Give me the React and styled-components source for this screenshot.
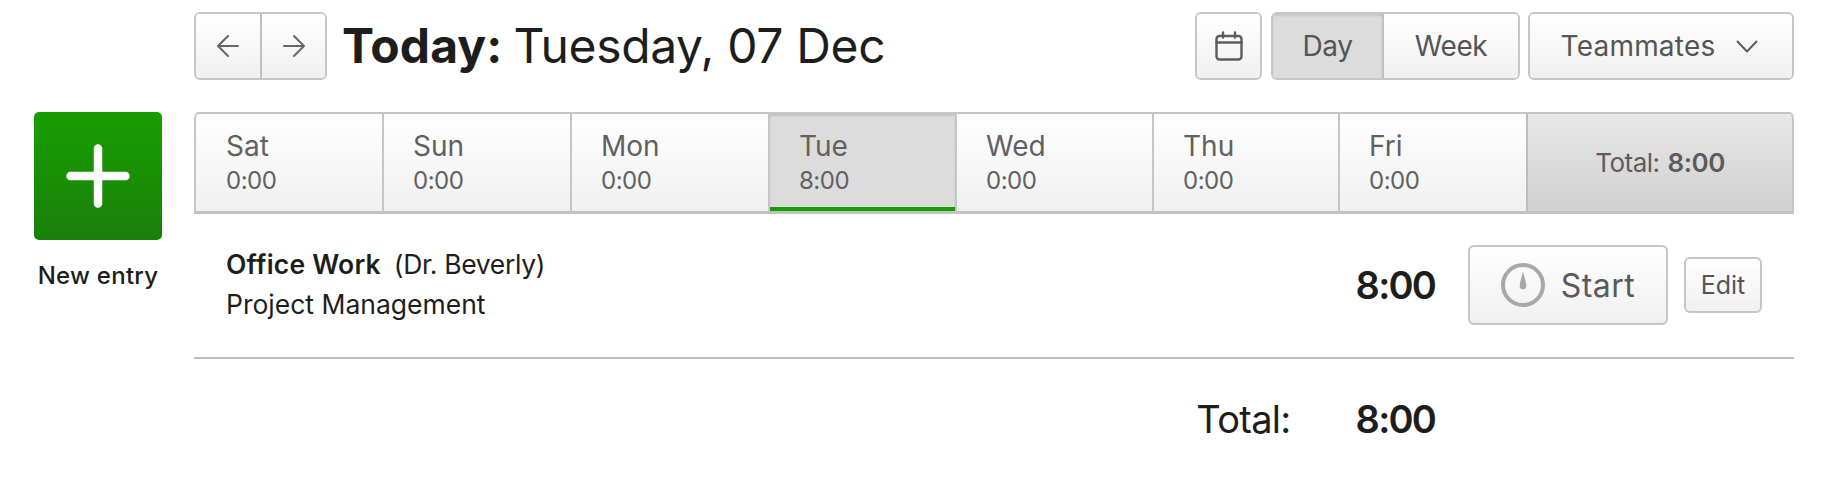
import React from "react";
import styled, { createGlobalStyle } from "styled-components";

const Global = createGlobalStyle`
  html, body { margin: 0; padding: 0; background: #fff; }
  body { font-family: Inter, "Liberation Sans", sans-serif; color: #1d1e1c; }
  * { box-sizing: border-box; }
`;

const Page = styled.div`
  width: 1826px;
  height: 478px;
  overflow: hidden;
  display: flex;
  gap: 32px;
  padding: 12px 32px 0 34px;
`;

const Sidebar = styled.aside`
  width: 128px;
  flex: none;
  padding-top: 100px;
  display: flex;
  flex-direction: column;
  align-items: center;
`;

const NewButton = styled.button`
  width: 128px;
  height: 128px;
  padding: 0;
  border: 0;
  border-radius: 5px;
  background: linear-gradient(#179e00, #1b7f0a);
  display: flex;
  align-items: center;
  justify-content: center;
`;

const NewLabel = styled.div`
  margin-top: 22px;
  font-size: 24px;
  line-height: 28px;
  font-weight: 500;
  letter-spacing: 0.25px;
  white-space: nowrap;
`;

const Main = styled.main`
  flex: 1;
  min-width: 0;
`;

const Toolbar = styled.div`
  height: 68px;
  display: flex;
  align-items: center;
`;

const Group = styled.div`
  height: 68px;
  display: flex;
  border: 2px solid #c6c6c6;
  border-radius: 6px;
  overflow: hidden;
  flex: none;
  margin-left: ${(p) => p.$ml || 0}px;
`;

const ToolButton = styled.div`
  width: ${(p) => p.$w}px;
  height: 100%;
  display: flex;
  align-items: center;
  justify-content: center;
  gap: 21px;
  padding-right: ${(p) => p.$pr || 0}px;
  font-size: 28px;
  letter-spacing: ${(p) => p.$ls ?? -0.4}px;
  color: #555;
  white-space: nowrap;
  background: ${(p) => (p.$on ? "#dcdcdc" : "linear-gradient(#fff, #f0f0f0)")};
  box-shadow: ${(p) => (p.$on ? "inset 0 2px 2px rgba(0,0,0,.1)" : "none")};
  & + & { border-left: 2px solid #c0c0c0; }
`;

const Title = styled.h1`
  margin: 0 0 0 15px;
  flex: 1;
  font-size: 48px;
  line-height: 68px;
  font-weight: 400;
  letter-spacing: -0.35px;
  white-space: nowrap;
  b { font-weight: 700; letter-spacing: 0.05px; margin-right: -2px; }
`;

const Week = styled.div`
  margin-top: 32px;
  height: 102px;
  display: grid;
  grid-template-columns: 188px 188px 198px 187px 197px 186px 188px 1fr;
  border-top: 2px solid #c6c6c6;
  border-bottom: 3px solid #c2c2c2;
  border-radius: 5px 5px 0 0;
`;

const Day = styled.div`
  padding: 14px 0 0 29px;
  border-left: 2px solid #c6c6c6;
  background: ${(p) => (p.$on ? "#dcdcdc" : "linear-gradient(#fff, #f0f0f0)")};
  box-shadow: ${(p) => (p.$on ? "inset 0 2px 2px rgba(0,0,0,.12), inset 0 -4px 0 #179c00" : "none")};
  color: #616161;
  &:first-child { border-top-left-radius: 5px; padding-left: 30px; }
`;

const DayName = styled.div`
  font-size: 28px;
  line-height: 36px;
  letter-spacing: 0;
`;

const DayHours = styled.div`
  font-size: 24px;
  line-height: 34px;
  letter-spacing: -0.5px;
`;

const WeekTotal = styled.div`
  display: flex;
  align-items: center;
  justify-content: center;
  gap: 8px;
  font-size: 26px;
  letter-spacing: -0.5px;
  color: #5c5c5c;
  background: linear-gradient(#e8e8e8, #d0d0d0);
  border-left: 2px solid #bdbdbd;
  border-right: 2px solid #c6c6c6;
  border-top-right-radius: 5px;
  b { font-weight: 600; }
`;

const Entry = styled.div`
  height: 145px;
  display: flex;
  align-items: center;
  padding: 0 32px 1px 32px;
  border-bottom: 2px solid #bdbdbd;
`;

const EntryText = styled.div`
  flex: 1;
  min-width: 0;
  margin-bottom: 2px;
`;

const EntryTitle = styled.div`
  font-size: 26.5px;
  line-height: 40px;
  letter-spacing: -0.35px;
  white-space: nowrap;
  b { font-weight: 600; margin-right: 13px; letter-spacing: 0.2px; }
`;

const EntryTask = styled(EntryTitle)`
  letter-spacing: 0;
`;

const Hours = styled.div`
  font-size: 38px;
  font-weight: 600;
  letter-spacing: -1.8px;
  line-height: 48px;
`;

const StartButton = styled.div`
  margin-left: 33px;
  width: 200px;
  height: 80px;
  border: 2px solid #c6c6c6;
  border-radius: 6px;
  background: linear-gradient(#fff, #f0f0f0);
  display: flex;
  align-items: center;
  justify-content: center;
  gap: 16px;
  font-size: 32px;
  letter-spacing: 0.5px;
  color: #5a5a5a;
`;

const EditButton = styled.div`
  margin-left: 16px;
  width: 78px;
  height: 56px;
  border: 2px solid #c6c6c6;
  border-radius: 6px;
  background: linear-gradient(#fff, #f0f0f0);
  display: flex;
  align-items: center;
  justify-content: center;
  font-size: 25px;
  letter-spacing: 0;
  color: #555;
`;

const TotalRow = styled.div`
  height: 120px;
  display: flex;
  justify-content: flex-end;
  align-items: center;
  gap: 65px;
  padding-right: 359px;
`;

const TotalLabel = styled.div`
  font-size: 38px;
  line-height: 48px;
  letter-spacing: -0.7px;
`;

const ArrowL = () => (
  <svg width="24" height="24" viewBox="0 0 24 24" fill="none" stroke="#666" strokeWidth="2" strokeLinecap="round" strokeLinejoin="round">
    <path d="M22 12H2M12 2 2 12l10 10" />
  </svg>
);
const ArrowR = () => (
  <svg width="24" height="24" viewBox="0 0 24 24" fill="none" stroke="#666" strokeWidth="2" strokeLinecap="round" strokeLinejoin="round">
    <path d="M2 12h20M12 2l10 10-10 10" />
  </svg>
);
const CalendarIcon = () => (
  <svg width="28" height="30" viewBox="0 0 28 30" fill="none" stroke="#5c5c5c" strokeWidth="2.4" strokeLinecap="round" strokeLinejoin="round">
    <rect x="1.5" y="5" width="25" height="23.5" rx="3" />
    <path d="M1.5 11.5h25M8 1.5v5M20 1.5v5" />
  </svg>
);
const Chevron = () => (
  <svg width="22" height="13" viewBox="0 0 22 13" fill="none" stroke="#5c5c5c" strokeWidth="2" strokeLinecap="round" strokeLinejoin="round">
    <path d="M1.5 1.5l9.5 10 9.5-10" />
  </svg>
);
const Plus = () => (
  <svg width="64" height="64" viewBox="0 0 64 64" fill="none" stroke="#fff" strokeWidth="8.5" strokeLinecap="round">
    <path d="M32 4.5v55M4.5 32h55" />
  </svg>
);
const Gauge = () => (
  <svg width="44" height="44" viewBox="0 0 44 44" fill="none">
    <circle cx="22" cy="22" r="20" stroke="#a8a8a8" strokeWidth="4" />
    <path d="M22 8c1 6 3.3 10 3.3 15a3.3 3.3 0 0 1-6.6 0C18.7 18 21 14 22 8z" fill="#a8a8a8" />
  </svg>
);

const days = [
  ["Sat", "0:00"],
  ["Sun", "0:00"],
  ["Mon", "0:00"],
  ["Tue", "8:00", true],
  ["Wed", "0:00"],
  ["Thu", "0:00"],
  ["Fri", "0:00"],
];

export default function App() {
  return (
    <Page>
      <Global />
      <Sidebar>
        <NewButton aria-label="New entry"><Plus /></NewButton>
        <NewLabel>New entry</NewLabel>
      </Sidebar>
      <Main>
        <Toolbar>
          <Group>
            <ToolButton $w={64}><ArrowL /></ToolButton>
            <ToolButton $w={65}><ArrowR /></ToolButton>
          </Group>
          <Title><b>Today:</b> Tuesday, 07 Dec</Title>
          <Group><ToolButton $w={63}><CalendarIcon /></ToolButton></Group>
          <Group $ml={9}>
            <ToolButton $w={109} $on>Day</ToolButton>
            <ToolButton $w={136}>Week</ToolButton>
          </Group>
          <Group $ml={8}>
            <ToolButton $w={262} $ls={0.2} $pr={3}>Teammates <Chevron /></ToolButton>
          </Group>
        </Toolbar>
        <Week>
          {days.map(([name, hours, on]) => (
            <Day key={name} $on={on}>
              <DayName>{name}</DayName>
              <DayHours>{hours}</DayHours>
            </Day>
          ))}
          <WeekTotal>Total: <b>8:00</b></WeekTotal>
        </Week>
        <Entry>
          <EntryText>
            <EntryTitle><b>Office Work</b>(Dr. Beverly)</EntryTitle>
            <EntryTask>Project Management</EntryTask>
          </EntryText>
          <Hours>8:00</Hours>
          <StartButton><Gauge />Start</StartButton>
          <EditButton>Edit</EditButton>
        </Entry>
        <TotalRow>
          <TotalLabel>Total:</TotalLabel>
          <Hours>8:00</Hours>
        </TotalRow>
      </Main>
    </Page>
  );
}
